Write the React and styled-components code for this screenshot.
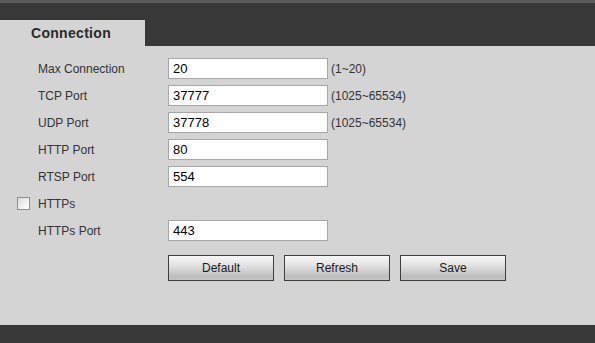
import React from "react";
import styled, { createGlobalStyle } from "styled-components";

const Global = createGlobalStyle`
  html, body {
    margin: 0;
    padding: 0;
    background: #d4d4d4;
  }
  body {
    font-family: "Liberation Sans", Arial, sans-serif;
  }
`;

const Page = styled.div`
  width: 595px;
  height: 343px;
  display: flex;
  flex-direction: column;
  background: #d4d4d4;
  overflow: hidden;
`;

const Header = styled.div`
  height: 46px;
  box-sizing: border-box;
  border-top: 3px solid #5b5b5b;
  background: #383838;
  display: flex;
  align-items: flex-end;
`;

const Tab = styled.div`
  width: 145px;
  height: 26px;
  background: #d4d4d4;
  box-sizing: border-box;
  padding-left: 31px;
  font-size: 14px;
  font-weight: bold;
  letter-spacing: 0.3px;
  color: #2a2a2a;
  line-height: 26px;
`;

const Body = styled.div`
  flex: 1;
  padding: 12px 0 0 0;
  display: flex;
  flex-direction: column;
  gap: 6px;
`;

const Row = styled.div`
  display: flex;
  align-items: center;
  height: 21px;
  padding-left: ${(p) => (p.$check ? "17px" : "38px")};
`;

const Label = styled.label`
  width: ${(p) => (p.$auto ? "auto" : "130px")};
  font-size: 12px;
  color: #333333;
  display: flex;
  align-items: center;
`;

const Field = styled.input`
  width: 160px;
  height: 21px;
  box-sizing: border-box;
  border: 1px solid #a8a8a8;
  background: #ffffff;
  padding: 0 0 0 4px;
  margin: 0;
  font-family: "Liberation Sans", Arial, sans-serif;
  font-size: 13px;
  color: #000000;
  outline: none;
`;

const Hint = styled.span`
  margin-left: 3px;
  font-size: 12px;
  color: #333333;
`;

const Box = styled.span`
  width: 13px;
  height: 13px;
  box-sizing: border-box;
  border: 1px solid #8e8e8e;
  background: linear-gradient(135deg, #dcdcdc 0%, #f6f6f6 70%, #ffffff 100%);
  margin-right: 8px;
`;

const Actions = styled.div`
  display: flex;
  gap: 10px;
  padding-left: 168px;
  margin-top: 8px;
`;

const Button = styled.button`
  width: 106px;
  height: 26px;
  box-sizing: border-box;
  border: 1px solid #3e3e3e;
  background: linear-gradient(to bottom, #f7f7f7 0%, #e2e2e2 40%, #bdbdbd 85%, #c4c4c4 100%);
  font-family: "Liberation Sans", Arial, sans-serif;
  font-size: 12px;
  color: #1a1a1a;
  padding: 0;
  margin: 0;
  cursor: pointer;
`;

const Footer = styled.div`
  height: 18px;
  background: #383838;
`;

const ports = [
  { label: "Max Connection", value: "20", hint: "(1~20)" },
  { label: "TCP Port", value: "37777", hint: "(1025~65534)" },
  { label: "UDP Port", value: "37778", hint: "(1025~65534)" },
  { label: "HTTP Port", value: "80" },
  { label: "RTSP Port", value: "554" },
];

export default function App() {
  return (
    <Page>
      <Global />
      <Header>
        <Tab>Connection</Tab>
      </Header>
      <Body>
        {ports.map((p) => (
          <Row key={p.label}>
            <Label>{p.label}</Label>
            <Field defaultValue={p.value} />
            {p.hint && <Hint>{p.hint}</Hint>}
          </Row>
        ))}
        <Row $check>
          <Label $auto>
            <Box />
            HTTPs
          </Label>
        </Row>
        <Row>
          <Label>HTTPs Port</Label>
          <Field defaultValue="443" />
        </Row>
        <Actions>
          <Button>Default</Button>
          <Button>Refresh</Button>
          <Button>Save</Button>
        </Actions>
      </Body>
      <Footer />
    </Page>
  );
}
